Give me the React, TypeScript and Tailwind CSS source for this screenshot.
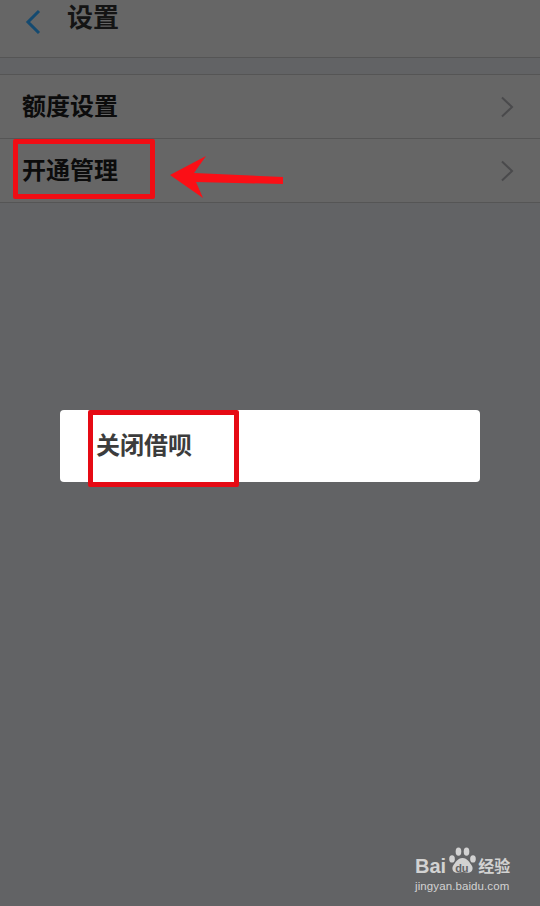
const cjk = 'font-["Liberation_Sans","Noto_Sans_CJK_SC",sans-serif]'

function Chevron() {
  return (
    <svg width="14" height="22" viewBox="0 0 14 22" fill="none" className="shrink-0">
      <path d="M2 1.5 L12 11 L2 20.5" stroke="#4a4a4c" strokeWidth="2" />
    </svg>
  )
}

function Row({ label }: { label: string }) {
  return (
    <div className="flex h-16 items-center justify-between border-b border-[#555555] pl-[22px] pr-[26px]">
      <span className="text-2xl font-bold text-[#0c0c0c]">{label}</span>
      <Chevron />
    </div>
  )
}

function Watermark() {
  return (
    <div className="absolute bottom-[12px] right-[30px] flex w-[95px] flex-col text-[#d2d2d2]">
      <div className="flex items-end">
        <span className="font-['Liberation_Sans',sans-serif] text-[20px] font-bold leading-[20px]">Bai</span>
        <div className="relative ml-[2px] h-[31px] w-[29px] shrink-0">
          <svg width="29" height="31" viewBox="0 0 36 34" fill="#d2d2d2">
            <ellipse cx="5" cy="15" rx="3.5" ry="4.5" />
            <ellipse cx="13" cy="6" rx="3.5" ry="5" />
            <ellipse cx="23" cy="6" rx="3.5" ry="5" />
            <ellipse cx="31" cy="15" rx="3.5" ry="4.5" />
            <path d="M18 14 C24 14 27 20 30 24 C32 29 28 33 23 32 C20 31 16 31 13 32 C8 33 4 29 6 24 C9 20 12 14 18 14 Z" />
          </svg>
          <span className="absolute bottom-[1px] left-[7px] text-[11px] font-bold leading-[14px] text-[#626365]">du</span>
        </div>
        <span className="ml-[1px] whitespace-nowrap text-[16px] font-bold leading-[18px]">经验</span>
      </div>
      <div className="mt-[3px] whitespace-nowrap text-[11.5px] leading-[15px] tracking-[0.1px]">jingyan.baidu.com</div>
    </div>
  )
}

export default function App() {
  return (
    <div className={`relative h-[906px] w-[540px] overflow-hidden bg-[#626365] ${cjk}`}>
      {/* Header */}
      <header className="flex h-[58px] items-start gap-[25px] border-b border-[#555555] bg-[#666666] pl-[24px] pt-[2px]">
        <svg width="18" height="26" viewBox="0 0 18 26" fill="none" className="mt-[7px]">
          <path d="M15 2 L4 13 L15 24" stroke="#144a70" strokeWidth="3" />
        </svg>
        <h1 className="text-[26px] font-bold leading-[32px] text-[#141414]">设置</h1>
      </header>

      {/* List */}
      <div className="mt-4 border-t border-[#555555] bg-[#666666]">
        <Row label="额度设置" />
        <Row label="开通管理" />
      </div>

      {/* Dialog */}
      <div className="absolute left-[60px] top-[410px] flex h-[72px] w-[420px] items-center rounded bg-white pl-9">
        <span className="text-2xl font-bold text-[#3c3c3c]">关闭借呗</span>
      </div>

      {/* Annotations */}
      <div className="absolute left-[13px] top-[139px] h-[60px] w-[142px] rounded-[2px] border-[5px] border-[#f00d14]" />
      <div className="absolute left-[88px] top-[410px] h-[77px] w-[151px] rounded-[2px] border-[5px] border-[#e60a14]" />
      <svg width="120" height="46" viewBox="0 0 120 46" className="absolute left-[170px] top-[154px]">
        <path d="M0 21 L36 2 L24 19 L113 23 L113 30 L26 28 L33 44 Z" fill="#fb0f16" />
      </svg>

      <Watermark />
    </div>
  )
}
